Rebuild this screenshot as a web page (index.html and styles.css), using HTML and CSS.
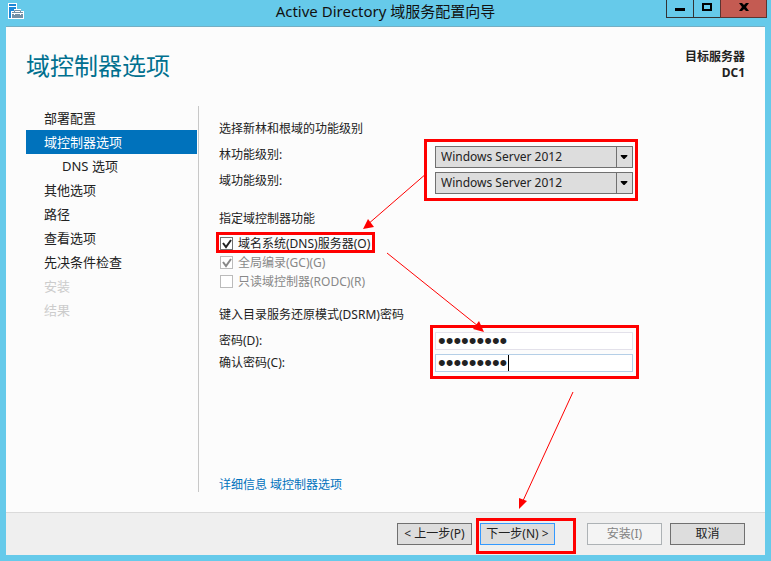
FILE: index.html
```html
<!DOCTYPE html>
<html lang="zh-CN">
    <head>
        <meta charset="UTF-8" />
        <meta name="viewport" content="width=device-width, initial-scale=1.0" />
        <title>Active Directory 域服务配置向导</title>
        <link rel="stylesheet" href="styles.css">
    </head>
    <body>
        <div class="window">
            <header class="titlebar">
                <svg class="app-icon" width="16" height="16" viewBox="0 0 16 16">
                    <path d="M0 0h9v16H0z" fill="#fff" />
                    <path d="M1 1h7v2H1zM1 4h7v2H6v2H4v7H1z" fill="#1e88d8" />
                    <path d="M3 8h3V6h7v2h3v8H3z" fill="#fff" />
                    <path d="M4 9h11v6H4z" fill="#7390a6" />
                    <path d="M6.500 9V7.500h6V9" fill="none" stroke="#7390a6" />
                    <path d="M4 10.500h11M6.500 10v2M12.500 10v2" stroke="#fff" />
                </svg>
                <div class="title">Active Directory 域服务配置向导</div>
                <div class="window-buttons">
                    <button type="button" aria-label="最小化">
                        <svg width="12" height="10" viewBox="0 0 12 10"><path d="M1 6h10v3H1z" /></svg>
                    </button>
                    <button type="button" aria-label="最大化">
                        <svg width="12" height="10" viewBox="0 0 12 10"><path d="M1 1h10v8H1zM3 3v4h6V3z" fill-rule="evenodd" /></svg>
                    </button>
                    <button type="button" class="close" aria-label="关闭">
                        <svg width="12" height="10" viewBox="0 0 12 10"><path d="M1 1h3l2 2 2-2h3L8 5l3 4H8L6 7 4 9H1l3-4z" /></svg>
                    </button>
                </div>
            </header>

            <div class="client">
                <div class="page-header">
                    <h1>域控制器选项</h1>
                    <div class="target">
                        <div>目标服务器</div>
                        <div>DC1</div>
                    </div>
                </div>

                <div class="wizard">
                    <nav>
                        <ul class="steps">
                            <li>部署配置</li>
                            <li class="active">域控制器选项</li>
                            <li class="sub">DNS 选项</li>
                            <li>其他选项</li>
                            <li>路径</li>
                            <li>查看选项</li>
                            <li>先决条件检查</li>
                            <li class="disabled">安装</li>
                            <li class="disabled">结果</li>
                        </ul>
                    </nav>

                    <main>
                        <section class="levels">
                            <h2>选择新林和根域的功能级别</h2>
                            <div class="row">
                                <label for="forest">林功能级别:</label>
                                <div class="dropdown">
                                    <select id="forest"><option>Windows Server 2012</option></select>
                                    <svg width="17" height="20" viewBox="0 0 17 20"><path d="M4 8h7v1l-3 3h-1L4 9z" /></svg>
                                </div>
                            </div>
                            <div class="row">
                                <label for="domain">域功能级别:</label>
                                <div class="dropdown">
                                    <select id="domain"><option>Windows Server 2012</option></select>
                                    <svg width="17" height="20" viewBox="0 0 17 20"><path d="M4 8h7v1l-3 3h-1L4 9z" /></svg>
                                </div>
                            </div>
                        </section>

                        <section class="features">
                            <h2>指定域控制器功能</h2>
                            <label class="check">
                                <input type="checkbox" checked>
                                <svg width="13" height="13" viewBox="0 0 13 13"><path d="M3 6l3 4 5-7" /></svg>
                                域名系统(DNS)服务器(O)
                            </label>
                            <label class="check disabled">
                                <input type="checkbox" checked disabled>
                                <svg width="13" height="13" viewBox="0 0 13 13"><path d="M3 6l3 4 5-7" /></svg>
                                全局编录(GC)(G)
                            </label>
                            <label class="check disabled">
                                <input type="checkbox" disabled>
                                <svg width="13" height="13" viewBox="0 0 13 13"><path d="M3 6l3 4 5-7" /></svg>
                                只读域控制器(RODC)(R)
                            </label>
                        </section>

                        <section class="passwords">
                            <h2>键入目录服务还原模式(DSRM)密码</h2>
                            <div class="row">
                                <label for="password">密码(D):</label>
                                <input id="password" type="password" value="password1">
                            </div>
                            <div class="row">
                                <label for="confirm">确认密码(C):</label>
                                <div class="focused">
                                    <input id="confirm" type="password" value="password1">
                                    <span class="caret"></span>
                                </div>
                            </div>
                        </section>

                        <p class="more"><a href="#">详细信息 域控制器选项</a></p>
                    </main>
                </div>

                <footer>
                    <div class="button-group">
                        <button type="button">&lt; 上一步(P)</button>
                        <button type="button" class="default">下一步(N) &gt;</button>
                    </div>
                    <button type="button" disabled>安装(I)</button>
                    <button type="button">取消</button>
                </footer>
            </div>

            <!-- red marks drawn over the dialog -->
            <svg class="marks" width="771" height="561" viewBox="0 0 771 561">
                <g class="boxes">
                    <rect x="425.5" y="140.5" width="211" height="59" />
                    <rect x="217.5" y="233.5" width="156" height="18" />
                    <rect x="431.5" y="326.5" width="206" height="51" />
                    <rect x="477.5" y="519.5" width="97" height="33" />
                </g>
                <path class="lines" d="M427 173L367 225M387 253L478 326M573 392L522 503" />
                <path class="heads" d="M363 229l5-10 6 8zM484 332l-11-3 6-8zM519 509l0-11 8 3z" />
            </svg>
        </div>
    </body>
</html>
```
FILE: styles.css
```css
* {
    box-sizing: border-box;
}

body {
    margin: 0;
    font-family: "Noto Sans", "Noto Sans CJK SC", sans-serif;
    font-size: 12px;
    line-height: 18px;
    color: #222;
}

h1, h2, p, ul {
    margin: 0;
    padding: 0;
    font-weight: normal;
}

h2 {
    font-size: 12px;
}

button, input, select {
    font: inherit;
    color: inherit;
}

.window {
    position: relative;
    display: flex;
    flex-direction: column;
    min-height: 100vh;
    padding: 0 6px 6px;
    background-color: #66caea;
}

/* title bar */
.titlebar {
    display: grid;
    grid-template-columns: 100px 1fr 100px;
    height: 26px;
}

.app-icon {
    margin: 3px 2px;
}

.title {
    font-size: 15px;
    line-height: 22px;
    text-align: center;
    color: #111;
}

.window-buttons {
    display: flex;
    justify-content: flex-end;
    align-items: flex-start;
    margin-right: -2px;
}

.window-buttons button {
    display: flex;
    justify-content: center;
    align-items: center;
    width: 27px;
    height: 18px;
    padding: 0 0 4px;
    border: 1px solid #333;
    border-top: 0;
    border-right: 0;
    background: none;
}

.window-buttons .close {
    width: 47px;
    border: 1px solid #5b3431;
    border-top: 0;
    background-color: #c45b52;
}

.client {
    flex: 1;
    display: flex;
    flex-direction: column;
    border-top: 1px solid #74afc4;
    background-color: #fcfcfc;
}

.page-header {
    display: flex;
    justify-content: space-between;
    align-items: flex-start;
    height: 79px;
    padding: 20px 20px 0;
}

.page-header h1 {
    font-size: 24px;
    line-height: 38px;
    color: #00708f;
}

.target {
    padding-top: 2px;
    font-weight: bold;
    line-height: 16px;
    text-align: right;
}

.wizard {
    flex: 1;
    display: flex;
    padding: 0 20px 20px;
}

nav {
    flex: 0 0 173px;
    border-right: 1px solid #c8c8c8;
}

.steps {
    margin-right: 1px;
    list-style-type: none;
    font-size: 13px;
    line-height: 24px;
}

.steps li {
    padding-left: 18px;
}

.steps .active {
    background-color: #0072bc;
    color: #fff;
}

.steps .sub {
    padding-left: 36px;
}

.steps .disabled {
    color: #ccc;
}

main {
    flex: 1;
    display: flex;
    flex-direction: column;
    padding: 14px 0 0 20px;
}

.row {
    display: grid;
    grid-template-columns: 216px 198px;
    align-items: center;
}

/* functional level lists */
.levels h2 {
    margin-bottom: 8px;
}

.levels .row {
    margin-bottom: 4px;
}

.levels label {
    padding-bottom: 4px;
}

.dropdown {
    display: grid;
}

.dropdown select {
    grid-area: 1 / 1;
    width: 100%;
    height: 22px;
    padding: 0 5px;
    border: 1px solid #707070;
    border-radius: 0;
    background-color: #ddd;
    appearance: none;
}

.dropdown svg {
    grid-area: 1 / 1;
    justify-self: end;
    align-self: center;
    border-left: 1px solid #707070;
    pointer-events: none;
}

/* check boxes */
.features {
    margin-top: 12px;
}

.features h2 {
    margin-bottom: 6px;
}

.check {
    display: grid;
    grid-template-columns: 13px 1fr;
    column-gap: 5px;
    align-items: center;
    height: 19px;
    padding-left: 1px;
}

.check input {
    grid-area: 1 / 1;
    width: 13px;
    height: 13px;
    margin: 0;
    border: 1px solid #707070;
    background-color: #fff;
    appearance: none;
}

.check svg {
    grid-area: 1 / 1;
    fill: none;
    stroke: #222;
    stroke-width: 2;
    pointer-events: none;
}

.check input:not(:checked) + svg {
    visibility: hidden;
}

.check.disabled {
    color: #888;
}

.check.disabled input {
    border-color: #bbb;
}

.check.disabled svg {
    stroke: #888;
}

/* passwords */
.passwords {
    margin-top: 15px;
}

.passwords h2 {
    margin-bottom: 8px;
}

.passwords .row {
    margin-bottom: 4px;
}

.passwords input {
    display: block;
    width: 100%;
    height: 18px;
    padding: 0 2px;
    border: 1px solid #e3e1ea;
    background-color: #fff;
    font-family: "Liberation Sans", sans-serif;
    font-size: 22px;
}

.focused {
    position: relative;
}

.passwords .focused input {
    border-color: #b5cfe7;
}

.caret {
    position: absolute;
    top: 1px;
    bottom: 1px;
    left: 73px;
    width: 1px;
    background-color: #000;
}

.more {
    margin-top: auto;
    line-height: 14px;
}

.more a {
    color: #0072bc;
    text-decoration: none;
}

/* wizard buttons */
footer {
    display: flex;
    justify-content: flex-end;
    gap: 8px;
    padding: 10px 20px;
    border-top: 1px solid #dadada;
    background-color: #efefef;
}

.button-group {
    display: flex;
    gap: 8px;
    margin-right: 24px;
}

footer button {
    width: 75px;
    height: 22px;
    padding: 0;
    border: 1px solid #707070;
    background-color: #ddd;
    line-height: 20px;
    white-space: nowrap;
}

footer .default {
    border-color: #3399ff;
}

footer button:disabled {
    border-color: #adb2b5;
    background-color: #f4f4f4;
    color: #838383;
}

/* overlay */
.marks {
    position: absolute;
    top: 0;
    left: 0;
    pointer-events: none;
}

.boxes {
    fill: none;
    stroke: #f00;
    stroke-width: 3;
}

.lines {
    fill: none;
    stroke: #f00;
}

.heads {
    fill: #f00;
}
```
